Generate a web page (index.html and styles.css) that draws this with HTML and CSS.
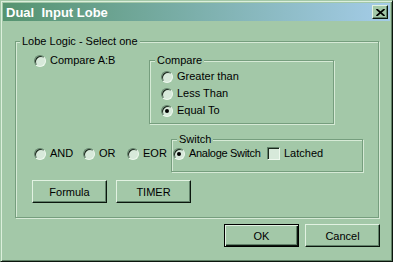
FILE: index.html
```html
<!DOCTYPE html>
<html lang="en">

<head>
    <meta charset="UTF-8">
    <title>Dual Input Lobe</title>
    <link rel="stylesheet" href="styles.css">
</head>

<body>
    <div class="window">
        <div class="titlebar">
            <span class="title">Dual&nbsp; Input Lobe</span>
            <span class="close">
                <svg width="9" height="7" viewBox="0 0 9 7">
                    <path d="M0.5 0 L8.5 7 M8.5 0 L0.5 7" stroke="#000" stroke-width="1.7" fill="none"/>
                </svg>
            </span>
        </div>
        <div class="content">
            <fieldset class="group main">
                <legend>Lobe Logic - Select one</legend>
                <div class="row top">
                    <label class="opt ab"><span class="radio"></span>Compare A:B</label>
                    <fieldset class="group compare">
                        <legend>Compare</legend>
                        <label class="opt"><span class="radio"></span>Greater than</label>
                        <label class="opt"><span class="radio"></span>Less Than</label>
                        <label class="opt"><span class="radio on"></span>Equal To</label>
                    </fieldset>
                </div>
                <div class="row middle">
                    <label class="opt and"><span class="radio"></span>AND</label>
                    <label class="opt or"><span class="radio"></span>OR</label>
                    <label class="opt or"><span class="radio"></span>EOR</label>
                    <fieldset class="group switch">
                        <legend>Switch</legend>
                        <div class="switch-row">
                            <label class="opt analoge"><span class="radio on"></span>Analoge Switch</label>
                            <label class="opt"><span class="check"></span>Latched</label>
                        </div>
                    </fieldset>
                </div>
                <div class="row buttons">
                    <button class="btn">Formula</button>
                    <button class="btn">TIMER</button>
                </div>
            </fieldset>
            <div class="footer">
                <button class="btn default">OK</button>
                <button class="btn">Cancel</button>
            </div>
        </div>
    </div>
</body>

</html>
```

FILE: styles.css
```css
* {
    box-sizing: border-box;
}

body {
    margin: 0;
    font-family: "Liberation Sans", Arial, sans-serif;
    font-size: 11px;
    color: #000;
    background-color: #a3c8a8;
}

.window {
    width: 393px;
    height: 262px;
    padding: 2px;
    background-color: #a3c8a8;
    border: 1px solid;
    border-color: #a3c8a8 #0b160d #0b160d #a3c8a8;
    box-shadow: inset 1px 1px 0 #dcefdc, inset -1px -1px 0 #5f7f65;
}

.titlebar {
    height: 18px;
    display: flex;
    align-items: center;
    justify-content: space-between;
    padding: 0 2px 0 3px;
    background: linear-gradient(to right, #55936f, #a4cce8);
}

.title {
    color: #fff;
    font-weight: bold;
    font-size: 13px;
}

.close {
    width: 16px;
    height: 14px;
    display: flex;
    align-items: center;
    justify-content: center;
    background-color: #a3c8a8;
    border: 1px solid;
    border-color: #e2f2e2 #0b160d #0b160d #e2f2e2;
    box-shadow: inset -1px -1px 0 #62826a;
}

.content {
    padding: 14px 0 0 12px;
}

.group {
    margin: 0;
    padding: 0;
    min-width: 0;
    border: 1px solid #769e7e;
    box-shadow: 1px 1px 0 #d6ead6, inset 1px 1px 0 #d6ead6;
}

.group legend {
    padding: 0 2px;
    margin-left: 5px;
    line-height: 13px;
    background-color: #a3c8a8;
}

.main {
    width: 364px;
    padding: 6px 0 14px 0;
}

.main > legend {
    margin-left: 4px;
}

.row {
    display: flex;
    align-items: flex-start;
}

.opt {
    display: flex;
    align-items: center;
    line-height: 13px;
    white-space: nowrap;
}

.ab {
    width: 115px;
    margin-left: 18px;
}

.compare {
    width: 185px;
    padding: 1px 0 4px 0;
}

.compare .opt {
    height: 17px;
    margin-left: 11px;
}

.middle {
    margin-top: 9px;
}

.middle > .opt {
    height: 15px;
    margin-top: 13px;
    width: 44px;
}

.middle > .and {
    width: 49px;
    margin-left: 18px;
}

.switch {
    width: 192px;
    padding: 0 0 10px 0;
}

.switch-row {
    display: flex;
    height: 15px;
    align-items: center;
}

.analoge {
    width: 94px;
    margin-left: 1px;
    letter-spacing: -0.3px;
}

.buttons {
    margin-top: 8px;
    margin-left: 16px;
    gap: 9px;
}

.radio {
    position: relative;
    flex: none;
    width: 12px;
    height: 12px;
    margin-right: 4px;
    border-radius: 50%;
    background-color: #d7e9da;
    border: 1px solid;
    border-color: #62826a #eef8ee #eef8ee #62826a;
    box-shadow: inset 1px 1px 0 #1a281c;
}

.radio.on::after {
    content: "";
    position: absolute;
    left: 3px;
    top: 3px;
    width: 4px;
    height: 4px;
    border-radius: 50%;
    background-color: #000;
}

.check {
    flex: none;
    width: 13px;
    height: 13px;
    margin-right: 4px;
    background-color: #d7e9da;
    border: 1px solid;
    border-color: #62826a #eef8ee #eef8ee #62826a;
    box-shadow: inset 1px 1px 0 #1a281c;
}

.btn {
    width: 75px;
    height: 23px;
    padding: 0;
    font: inherit;
    color: #000;
    background-color: #a3c8a8;
    border: 1px solid;
    border-color: #e2f2e2 #0b160d #0b160d #e2f2e2;
    box-shadow: inset -1px -1px 0 #62826a;
}

.btn.default {
    border-color: #000;
    box-shadow: inset 1px 1px 0 #e2f2e2, inset -1px -1px 0 #0b160d, inset -2px -2px 0 #62826a;
}

.footer {
    display: flex;
    justify-content: flex-end;
    gap: 6px;
    margin-top: 6px;
    padding-right: 10px;
}
```
